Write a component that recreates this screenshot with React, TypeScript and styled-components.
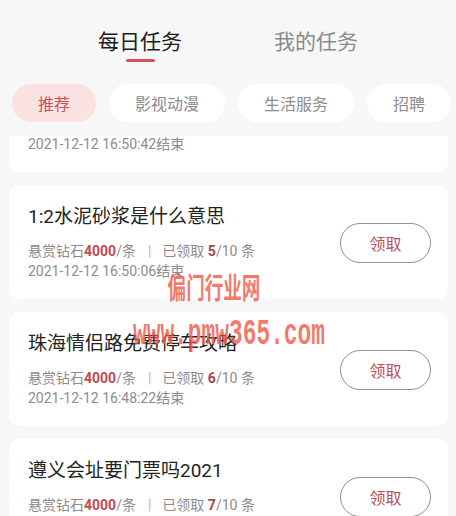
import React, { useLayoutEffect, useRef, useState } from 'react';
import styled, { createGlobalStyle } from 'styled-components';

const GlobalStyle = createGlobalStyle`
  html, body {
    margin: 0;
    padding: 0;
    background: #f7f7f7;
  }
  body {
    font-family: Roboto, "Noto Sans CJK SC", "Noto Sans", sans-serif;
  }
  * {
    box-sizing: border-box;
  }
`;

const Page = styled.div`
  position: relative;
  width: 456px;
  height: 516px;
  overflow: hidden;
  display: flex;
  flex-direction: column;
  background: #f7f7f7;
`;

const TabsRow = styled.div`
  display: flex;
  justify-content: center;
  gap: 92px;
  padding-top: 28px;
`;

const TabItem = styled.div<{ active?: boolean }>`
  display: flex;
  flex-direction: column;
  align-items: center;
  font-size: 21px;
  line-height: 28px;
  color: ${p => (p.active ? '#1c1c1c' : '#8a8a8a')};
  cursor: pointer;
`;

const TabLine = styled.div<{ visible?: boolean }>`
  width: 29px;
  height: 3px;
  margin-top: 3px;
  border-radius: 2px;
  background: ${p => (p.visible ? '#d0505c' : 'transparent')};
`;

const ChipsRow = styled.div`
  display: flex;
  gap: 13px;
  margin-top: 22px;
  padding-left: 12px;
  white-space: nowrap;
  overflow: hidden;
  flex-shrink: 0;
`;

const Chip = styled.div<{ active?: boolean }>`
  flex-shrink: 0;
  height: 38px;
  padding: 0 26px;
  border-radius: 19px;
  display: flex;
  align-items: center;
  font-size: 16px;
  color: ${p => (p.active ? '#c8505a' : '#8c8c8c')};
  background: ${p => (p.active ? '#fbe2e2' : '#ffffff')};
`;

const ListViewport = styled.div`
  flex: 1;
  margin-top: 14px;
  overflow: hidden;
`;

const List = styled.div`
  display: flex;
  flex-direction: column;
  gap: 13px;
  padding: 0 8px 20px 9px;
`;

const Card = styled.div`
  display: flex;
  align-items: center;
  height: 114px;
  padding: 20px 17px 18px 19px;
  background: #ffffff;
  border-radius: 10px;
`;

const Info = styled.div`
  flex: 1;
  min-width: 0;
`;

const Title = styled.div`
  font-size: 19px;
  line-height: 24px;
  color: #222222;
  white-space: nowrap;
`;

const Meta = styled.div`
  margin-top: 12px;
  font-size: 14px;
  line-height: 20px;
  color: #8c8c8c;
  white-space: nowrap;
`;

const Reward = styled.b`
  color: #c24a55;
`;

const Taken = styled.b`
  color: #9e4652;
`;

const Sep = styled.span`
  margin: 0 11px 0 12px;
  color: #b5b5b5;
`;

const DateLine = styled.div`
  font-size: 14px;
  line-height: 20px;
  color: #8c8c8c;
`;

const ClaimButton = styled.button`
  flex-shrink: 0;
  width: 91px;
  height: 40px;
  border: 1px solid #8f8f8f;
  border-radius: 20px;
  background: #ffffff;
  font-family: inherit;
  font-size: 16px;
  color: #b8525d;
  cursor: pointer;
`;

const Stamp = styled.div`
  position: absolute;
  pointer-events: none;
  color: rgba(239, 92, 76, 0.82);
  font-weight: 700;
  white-space: nowrap;
`;

const StampName = styled(Stamp)`
  left: 140px;
  top: 273px;
  width: 148px;
  text-align: center;
  font-size: 29px;
  line-height: 32px;
  transform: scaleX(0.64);
`;

const StampUrl = styled(Stamp)`
  left: 20px;
  top: 315px;
  width: 418px;
  text-align: center;
  font-family: "Liberation Mono", "DejaVu Sans Mono", monospace;
  font-size: 36px;
  line-height: 40px;
  transform: scaleX(0.635);
`;

interface ITask {
    title: string;
    reward: number;
    taken: number;
    total: number;
    endAt: string;
}

const tasks: ITask[] = [
    { title: '外卖平台骑手招募怎么报名', reward: 4000, taken: 4, total: 10, endAt: '2021-12-12 16:50:42' },
    { title: '1:2水泥砂浆是什么意思', reward: 4000, taken: 5, total: 10, endAt: '2021-12-12 16:50:06' },
    { title: '珠海情侣路免费停车攻略', reward: 4000, taken: 6, total: 10, endAt: '2021-12-12 16:48:22' },
    { title: '遵义会址要门票吗2021', reward: 4000, taken: 7, total: 10, endAt: '2021-12-12 16:47:51' },
];

const categories = ['推荐', '影视动漫', '生活服务', '招聘'];

const TaskCard: React.FC<{ task: ITask }> = ({ task }) => (
    <Card>
        <Info>
            <Title>{task.title}</Title>
            <Meta>
                悬赏钻石<Reward>{task.reward}</Reward>/条
                <Sep>|</Sep>
                已领取 <Taken>{task.taken}</Taken>/{task.total} 条
            </Meta>
            <DateLine>{task.endAt}结束</DateLine>
        </Info>
        <ClaimButton>领取</ClaimButton>
    </Card>
);

export default function App() {
    const [tab, setTab] = useState(0);
    const [category, setCategory] = useState(0);
    const listRef = useRef<HTMLDivElement>(null);

    // the list is shown scrolled down a bit
    useLayoutEffect(() => {
        if (listRef.current) listRef.current.scrollTop = 78;
    }, []);

    return (
        <Page>
            <GlobalStyle />
            <TabsRow>
                {['每日任务', '我的任务'].map((label, i) => (
                    <TabItem key={label} active={tab === i} onClick={() => setTab(i)}>
                        {label}
                        <TabLine visible={tab === i} />
                    </TabItem>
                ))}
            </TabsRow>
            <ChipsRow>
                {categories.map((c, i) => (
                    <Chip key={c} active={category === i} onClick={() => setCategory(i)}>
                        {c}
                    </Chip>
                ))}
            </ChipsRow>
            <ListViewport ref={listRef}>
                <List>
                    {tasks.map(task => <TaskCard key={task.endAt} task={task} />)}
                </List>
            </ListViewport>
            <StampName>偏门行业网</StampName>
            <StampUrl>www.pmw365.com</StampUrl>
        </Page>
    );
}
